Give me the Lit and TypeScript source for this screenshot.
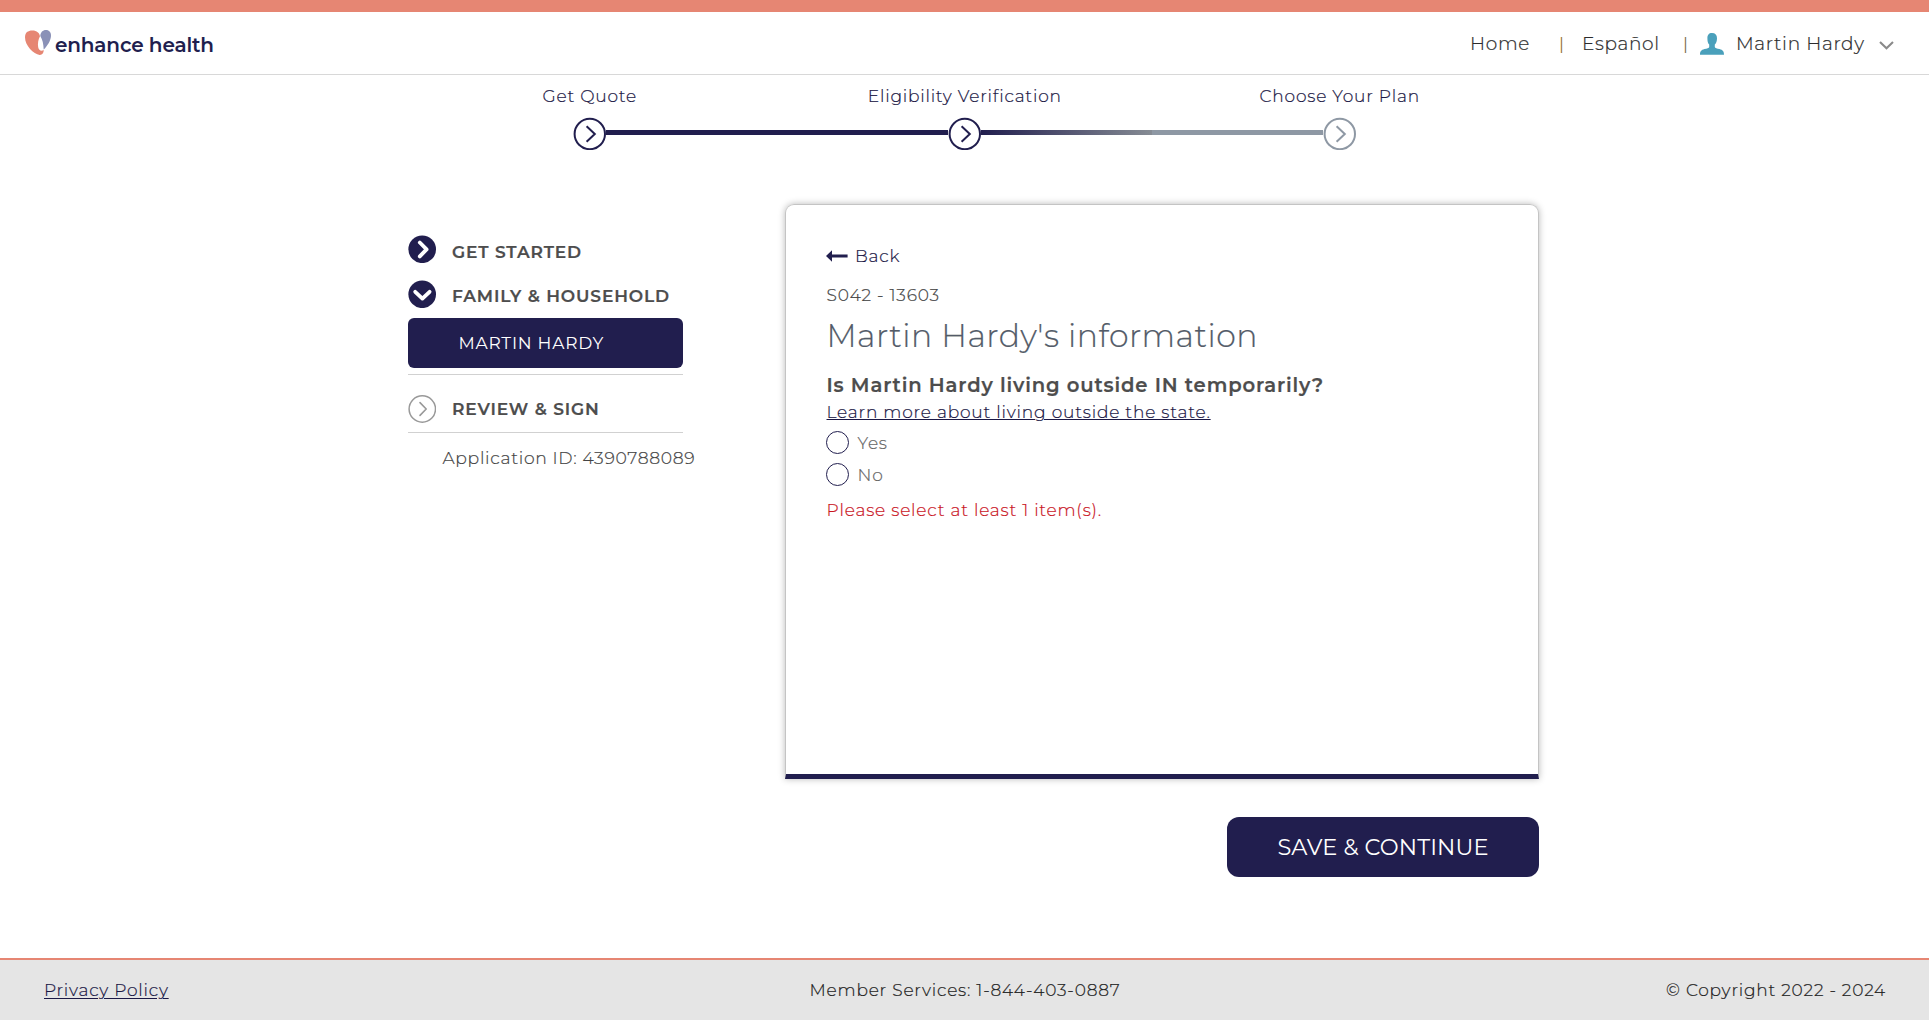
import { LitElement, html, svg, css } from "lit";
import { customElement, property } from "lit/decorators.js";

type StepState = "done" | "current" | "todo";

@customElement("progress-steps")
export class ProgressSteps extends LitElement {
  static styles = css`
    :host { display: flex; justify-content: center; padding-top: 9px; }
    .step { width: 375px; display: flex; flex-direction: column; align-items: center; }
    .label { height: 24px; line-height: 24px; margin-bottom: 9px; font-size: 17px; font-weight: 300; letter-spacing: 0.8px; text-indent: 0.5px; color: #1b1845; white-space: nowrap; -webkit-text-stroke: 0.2px currentColor; }
    .track { width: 375px; display: flex; align-items: center; }
    .half { flex: 1; height: 5px; margin-bottom: 2px; }
    .solid { background: #211e4e; }
    .fade { background: linear-gradient(90deg, #211e4e, #868c94); }
    .grey { background: #8e98a4; }
    svg { display: block; flex: none; width: 33px; height: 33px; fill: none; stroke: #211e4e; stroke-width: 2; }
    .todo svg { stroke: #8e98a4; }
  `;

  private steps: { label: string; state: StepState; left: string; right: string }[] = [
    { label: "Get Quote", state: "done", left: "", right: "solid" },
    { label: "Eligibility Verification", state: "current", left: "solid", right: "fade" },
    { label: "Choose Your Plan", state: "todo", left: "grey", right: "" },
  ];

  render() {
    return this.steps.map(
      (s) => html`
        <div class="step ${s.state}">
          <div class="label">${s.label}</div>
          <div class="track">
            <div class="half ${s.left}"></div>
            <svg viewBox="0 0 33 33"><circle cx="16.8" cy="17" r="15.2" /><path d="M13.6 9.3 21.8 17 13.6 24.8" /></svg>
            <div class="half ${s.right}"></div>
          </div>
        </div>
      `
    );
  }
}

@customElement("nav-marker")
export class NavMarker extends LitElement {
  @property() kind = "right";

  static styles = css`
    :host { display: block; width: 28px; height: 28px; }
    svg { display: block; fill: none; stroke-linecap: round; stroke-linejoin: round; }
  `;

  render() {
    const shape =
      this.kind === "todo"
        ? svg`<circle cx="14.3" cy="14" r="13.2" stroke="#999" stroke-width="1.5" /><path d="M12 7.6 18.2 14 12 20.4" stroke="#999" stroke-width="1.6" />`
        : svg`<circle cx="14.2" cy="14.3" r="13.8" fill="#211e4e" /><path d="${
            this.kind === "down" ? "M7.2 11.8 14.4 18.6 21.6 11.8" : "M11.8 7.5 18.6 14.4 11.8 21.4"
          }" stroke="#fff" stroke-width="3.8" />`;
    return html`<svg width="28" height="28" viewBox="0 0 28 28">${shape}</svg>`;
  }
}

@customElement("side-nav")
export class SideNav extends LitElement {
  static styles = css`
    :host { display: block; width: 275px; padding-top: 31px; }
    .row { display: flex; height: 28px; gap: 16px; }
    .name { font-size: 17px; font-weight: 600; color: #4d4d4d; line-height: 28px; letter-spacing: 0.88px; white-space: nowrap; -webkit-text-stroke: 0.2px currentColor; }
    .started { margin-bottom: 17px; }
    .started .name { padding-top: 3px; }
    .family { margin-bottom: 10px; }
    .family .name { padding-top: 2px; }
    .person { height: 50px; line-height: 50px; padding-left: 50.5px; border-radius: 6px; background: #211e4e; color: #fff; font-size: 17px; letter-spacing: 0.77px; }
    hr { height: 1px; border: 0; margin: 0; background: #d1d1d1; }
    .first { margin: 6px 0 20px; }
    .second { margin-top: 9px; }
    .app-id { margin: 13px 0 0 34.5px; line-height: 24px; font-size: 17.2px; font-weight: 300; letter-spacing: 0.69px; color: #444; white-space: nowrap; -webkit-text-stroke: 0.2px currentColor; }
  `;

  render() {
    return html`
      <div class="row started"><nav-marker kind="right"></nav-marker><div class="name">GET STARTED</div></div>
      <div class="row family"><nav-marker kind="down"></nav-marker><div class="name">FAMILY &amp; HOUSEHOLD</div></div>
      <div class="person">MARTIN HARDY</div>
      <hr class="first" />
      <div class="row"><nav-marker kind="todo"></nav-marker><div class="name">REVIEW &amp; SIGN</div></div>
      <hr class="second" />
      <div class="app-id">Application ID: 4390788089</div>
    `;
  }
}

@customElement("question-card")
export class QuestionCard extends LitElement {
  static styles = css`
    :host { display: block; box-sizing: border-box; width: 754px; height: 575px; padding: 39px 40px 0 40.5px; border: 1px solid #c4c4c4; border-bottom: 5px solid #211e4e; border-radius: 9px 9px 0 0; box-shadow: 0 0 7px rgba(0, 0, 0, 0.28); font-size: 17px; font-weight: 300; letter-spacing: 0.81px; line-height: 24px; color: #444; white-space: nowrap; -webkit-text-stroke: 0.2px currentColor; }
    .back { display: flex; align-items: center; gap: 7px; height: 24px; color: #1b1845; }
    .back svg { display: block; fill: #211e4e; margin-left: -0.5px; }
    .code { margin-top: 15px; }
    .title { margin: 9px 0 0; font-size: 31.5px; font-weight: 300; line-height: 40px; letter-spacing: 0.48px; color: #535b68; }
    .question { margin: 16px 0 0; font-size: 19.6px; font-weight: 600; line-height: 26px; letter-spacing: 0.86px; color: #4d4d4d; }
    .more { display: block; margin-top: 2px; color: #1b1845; text-decoration: underline; text-decoration-thickness: 1px; text-underline-offset: 1px; }
    .options { margin: 7px 0 0; }
    .option { display: flex; align-items: center; gap: 9px; height: 23px; color: #666; }
    .option + .option { margin-top: 9px; }
    .radio { width: 23px; height: 23px; box-sizing: border-box; border: 1px solid #211e4e; border-radius: 50%; margin-left: -1px; }
    .error { margin-top: 12px; color: #c9151f; }
  `;

  render() {
    return html`
      <div class="back">
        <svg width="22" height="12" viewBox="0 0 22 12"><path d="M0 6 6 .3V4.6H21.6V7.6H6V11.8Z" /></svg>
        <span>Back</span>
      </div>
      <div class="code">S042 - 13603</div>
      <h1 class="title">Martin Hardy's information</h1>
      <h2 class="question">Is Martin Hardy living outside IN temporarily?</h2>
      <div><a class="more">Learn more about living outside the state.</a></div>
      <div class="options">
        ${["Yes", "No"].map((o) => html`<div class="option"><span class="radio"></span><span>${o}</span></div>`)}
      </div>
      <div class="error">Please select at least 1 item(s).</div>
    `;
  }
}

@customElement("app-root")
export class AppRoot extends LitElement {
  static styles = css`
    :host { display: flex; flex-direction: column; box-sizing: border-box; height: 100vh; border-top: 12px solid #e68673; background: #fff; font-family: "Montserrat", "Inter", sans-serif; overflow: hidden; }
    header { display: flex; justify-content: space-between; height: 62px; flex: none; border-bottom: 1px solid #d8d8d8; padding: 0 35px 0 25px; white-space: nowrap; }
    .brand { display: flex; align-items: center; gap: 3px; color: #211e4e; font-size: 20px; font-weight: 600; letter-spacing: -0.16px; line-height: 24px; }
    .brand span { padding-top: 3px; }
    .brand svg { display: block; }
    nav { display: flex; align-items: center; font-size: 18.5px; font-weight: 300; color: #2b2b2b; line-height: 24px; padding-top: 1px; -webkit-text-stroke: 0.2px currentColor; }
    nav > * { flex: none; }
    .home { width: 89px; letter-spacing: 0.7px; }
    .bar { width: 23px; font-size: 17px; color: #8a5f20; }
    .lang { width: 101px; letter-spacing: 0.66px; }
    .bar.last { width: 17px; color: #6e5a3a; }
    .user { width: 36px; }
    .name { width: 143px; letter-spacing: 0.68px; }
    .user svg, .chev svg { display: block; }
    .user { padding-top: 1px; }
    .chev { padding-top: 3px; }
    main { display: flex; gap: 102px; flex: none; padding: 54px 0 0 408px; }
    .actions { display: flex; justify-content: flex-end; margin-top: 38px; }
    button { width: 312px; height: 60px; padding: 0; border: 0; border-radius: 12px; background: #211e4e; color: #fff; font: 400 22.5px "Montserrat", "Inter", sans-serif; letter-spacing: 0.1px; }
    footer { display: grid; grid-template-columns: 1fr auto 1fr; align-items: center; box-sizing: border-box; height: 62px; margin-top: auto; padding: 0 43px 0 44px; flex: none; border-top: 2px solid #e68673; background: #e5e5e5; font-size: 17px; font-weight: 300; letter-spacing: 0.79px; color: #222; white-space: nowrap; -webkit-text-stroke: 0.2px currentColor; }
    .privacy { justify-self: start; color: #1b1845; text-decoration: underline; text-decoration-thickness: 1px; text-underline-offset: 2px; }
    .copy { justify-self: end; }
  `;

  render() {
    return html`
      <header>
        <div class="brand">
          <svg width="27" height="26" viewBox="0 0 27 26">
            <path fill="#e68673" d="M0 7.2C0 2.4 2.9.4 7.2.4 11.6.3 14.6 2.8 15 6.3 13.3 9.4 12.5 13.7 13.2 17.2 13.8 20.6 16.3 21.4 18.7 20 18.8 23 17.3 25 14.7 24.9 8.6 24.2 0 15.6 0 7.2Z" />
            <path fill="#8a91b7" d="M15.3 6C15.6 2.4 17.7.1 20.9.1 24.3.1 26.2 2.5 26 5.9 25.7 10.7 22.5 15.6 18.7 19.6 18.5 14.1 17.6 9.7 15.3 6Z" />
          </svg>
          <span>enhance health</span>
        </div>
        <nav>
          <span class="home">Home</span><span class="bar">|</span><span class="lang">Español</span><span class="bar last">|</span>
          <span class="user"><svg width="24" height="22" viewBox="0 0 24 22"><path fill="#4aa0bb" d="M12 0C15.3 0 17 2 17 5.3 17 8.2 16.2 10.3 14.8 11.6V14C15 15.1 17 15.4 19.5 16.1 23 17.1 24 18.6 24 21.7H0C0 18.6 1 17.1 4.5 16.1 7 15.4 9 15.1 9.2 14V11.6C7.8 10.3 7.4 8.2 7.4 5.3 7.4 2 8.7 0 12 0Z" /></svg></span>
          <span class="name">Martin Hardy</span>
          <span class="chev"><svg width="15" height="9" viewBox="0 0 15 9"><path d="M1 1 7.5 7.2 14 1" fill="none" stroke="#8a8a8a" stroke-width="2.1" /></svg></span>
        </nav>
      </header>
      <progress-steps></progress-steps>
      <main>
        <side-nav></side-nav>
        <section>
          <question-card></question-card>
          <div class="actions"><button>SAVE &amp; CONTINUE</button></div>
        </section>
      </main>
      <footer>
        <a class="privacy">Privacy Policy</a>
        <span>Member Services: 1-844-403-0887</span>
        <span class="copy">© Copyright 2022 - 2024</span>
      </footer>
    `;
  }
}
